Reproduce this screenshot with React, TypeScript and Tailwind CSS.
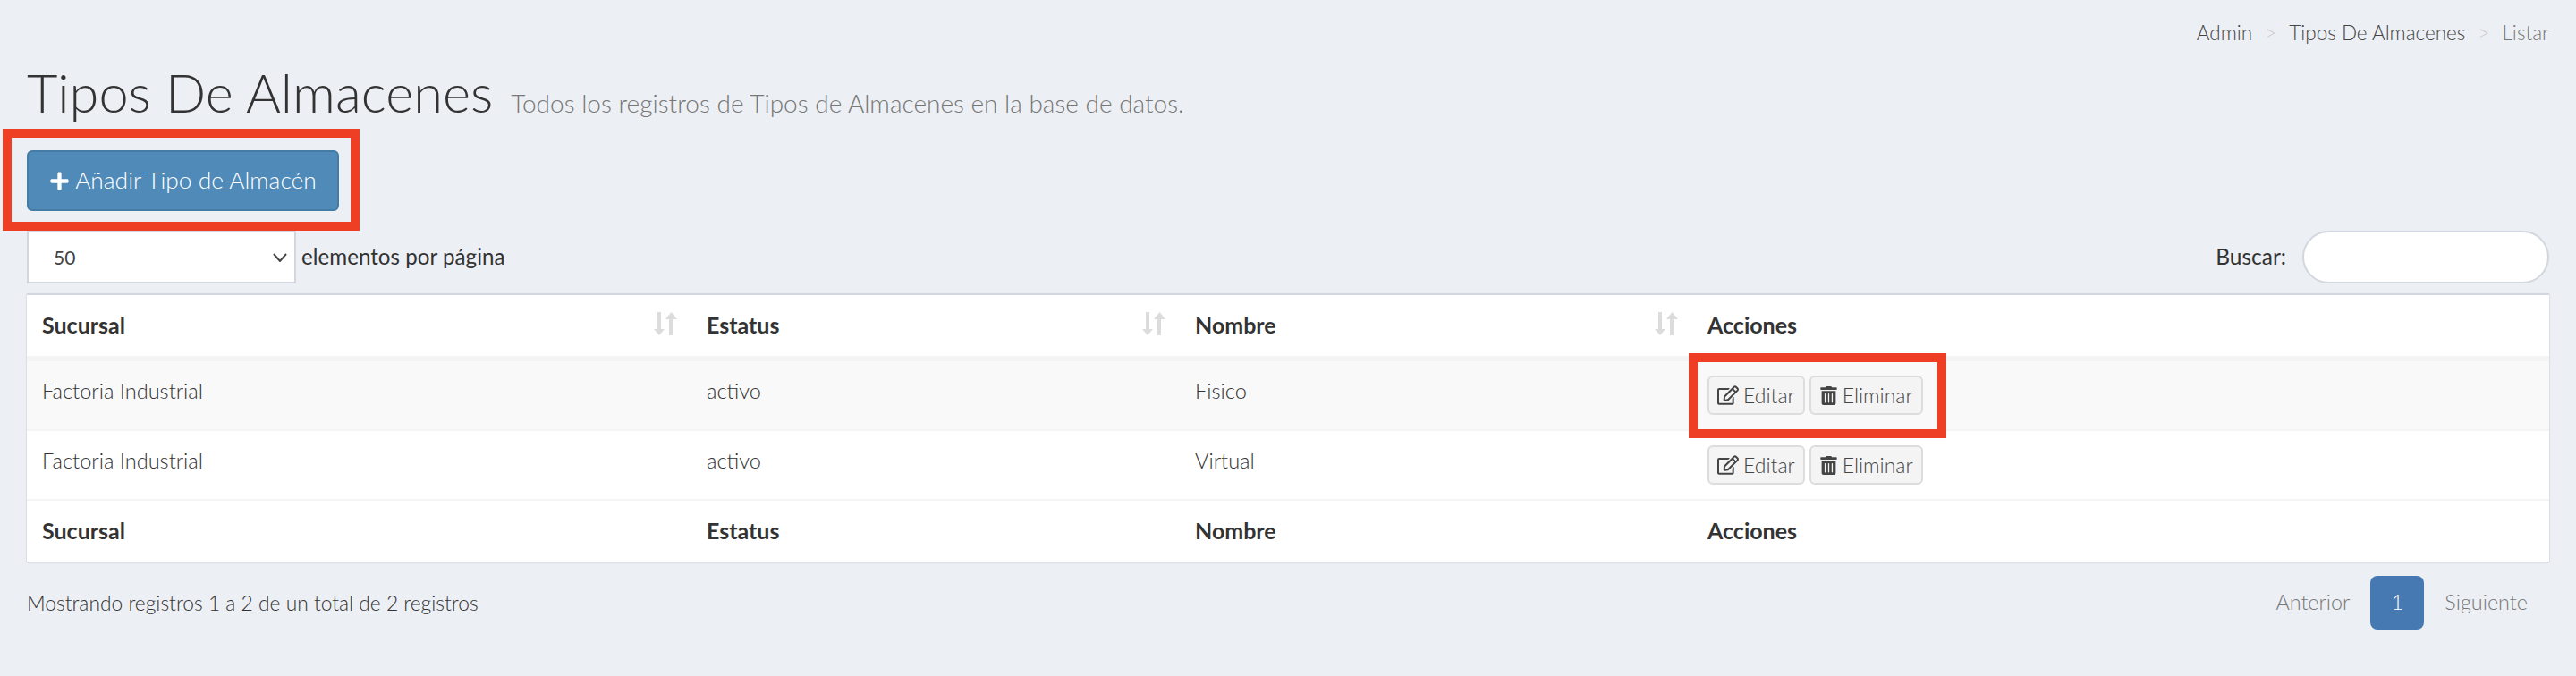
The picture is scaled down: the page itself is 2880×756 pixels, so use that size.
import { FaPlus, FaRegEdit, FaTrashAlt } from "react-icons/fa";

const columns = ["Sucursal", "Estatus", "Nombre", "Acciones"];
const rows = [
  { branch: "Factoria Industrial", status: "activo", name: "Fisico" },
  { branch: "Factoria Industrial", status: "activo", name: "Virtual" },
];
const gridCols = "grid grid-cols-[743px_546px_573px_1fr]";

function SortIcon() {
  return (
    <svg width="26" height="26" viewBox="0 0 26 26" fill="#dcdcdc" className="absolute right-[33px] top-[19px]">
      <path d="M4 0h4v19h4l-6 7-6-7h4z" />
      <path d="M17 26h4V8h5L19.5 0 13 8h4z" />
    </svg>
  );
}

function ActionButton({ icon, label }: { icon: React.ReactNode; label: string }) {
  return (
    <button className="flex h-[44px] items-center gap-[5px] rounded-[6px] border-2 border-[#dddddd] bg-[#f4f4f4] px-[9px] text-[23px] font-light text-[#444444]">
      {icon}
      {label}
    </button>
  );
}

export default function App() {
  return (
    <div className="h-[756px] overflow-hidden bg-[#eceff4] px-[30px] pt-[23px] font-['Lato','Liberation_Sans',sans-serif] font-light text-[#333333]">
      <div className="flex h-[28px] items-center justify-end gap-[14px] text-[22.5px] leading-none">
        <span className="text-[#444444]">Admin</span>
        <span className="text-[#cccccc]">&gt;</span>
        <span className="text-[#444444]">Tipos De Almacenes</span>
        <span className="text-[#cccccc]">&gt;</span>
        <span className="text-[#777777]">Listar</span>
      </div>

      <div className="mt-[16px] flex h-[72px] items-baseline gap-[20px]">
        <h1 className="text-[59.5px] leading-[72px] font-light text-[#333333]">Tipos De Almacenes</h1>
        <span className="text-[28px] text-[#777777]">Todos los registros de Tipos de Almacenes en la base de datos.</span>
      </div>

      <div className="relative mt-[29px] w-fit">
        <button className="flex h-[68px] w-[349px] items-center justify-center gap-[6px] rounded-[6px] border-2 border-[#457ca6] bg-[#4f8ab8] text-[26.4px] text-white">
          <FaPlus className="size-[23px]" />
          Añadir Tipo de Almacén
        </button>
        <div className="absolute -top-[24px] -right-[23px] -bottom-[22px] -left-[27px] border-[10px] border-[#ee3f24]" />
      </div>

      <div className="mt-[22px] flex h-[59px] items-center justify-between">
        <div className="flex items-center gap-[6px] text-[24.2px] font-normal">
          <div className="flex h-[59px] w-[301px] items-center justify-between border-2 border-[#d2d6de] bg-white pr-[8px] pl-[28px] text-[21px] text-[#444444]">
            50
            <svg width="16" height="10" viewBox="0 0 16 10" fill="none" stroke="#444444" strokeWidth="2">
              <path d="M1 1l7 8 7-8" />
            </svg>
          </div>
          elementos por página
        </div>
        <div className="flex items-center gap-[18px] text-[24.5px] font-normal">
          Buscar:
          <div className="h-[59px] w-[276px] rounded-full border-2 border-[#d2d6de] bg-white" />
        </div>
      </div>

      <div className="mt-[11px] border-t-2 border-[#d2d6de] bg-white shadow-[0_1px_2px_rgba(0,0,0,0.2)]">
        <div className={`${gridCols} h-[74px] border-b-[6px] border-[#f4f4f4] pl-[17px] text-[25px] font-bold`}>
          {columns.map((col, i) => (
            <div key={col} className="relative flex items-center">
              {col}
              {i < 3 && <SortIcon />}
            </div>
          ))}
        </div>
        {rows.map((row, i) => (
          <div
            key={row.name}
            className={`${gridCols} h-[78px] border-b-2 border-[#f4f4f4] pl-[17px] text-[23.6px] ${i === 0 ? "bg-[#f9f9f9]" : "bg-white"}`}
          >
            <div className="pt-[16px]">{row.branch}</div>
            <div className="pt-[16px]">{row.status}</div>
            <div className="pt-[16px]">{row.name}</div>
            <div className="relative flex gap-[5px] pt-[16px]">
              <ActionButton icon={<FaRegEdit className="size-[24px]" />} label="Editar" />
              <ActionButton icon={<FaTrashAlt className="size-[21px]" />} label="Eliminar" />
              {i === 0 && (
                <div className="absolute -top-[9px] left-[-21px] h-[95px] w-[288px] border-[10px] border-[#ee3f24]" />
              )}
            </div>
          </div>
        ))}
        <div className={`${gridCols} h-[68px] pl-[17px] text-[25px] font-bold`}>
          {columns.map((col) => (
            <div key={col} className="flex items-center">
              {col}
            </div>
          ))}
        </div>
      </div>

      <div className="mt-[16px] flex h-[60px] items-center justify-between text-[22.8px]">
        <span>Mostrando registros 1 a 2 de un total de 2 registros</span>
        <div className="flex items-center pr-[24px] text-[23.4px] text-[#777777]">
          <span>Anterior</span>
          <span className="mx-[23px] flex size-[60px] items-center justify-center rounded-[8px] bg-[#4679b2] text-white">1</span>
          <span>Siguiente</span>
        </div>
      </div>
    </div>
  );
}
